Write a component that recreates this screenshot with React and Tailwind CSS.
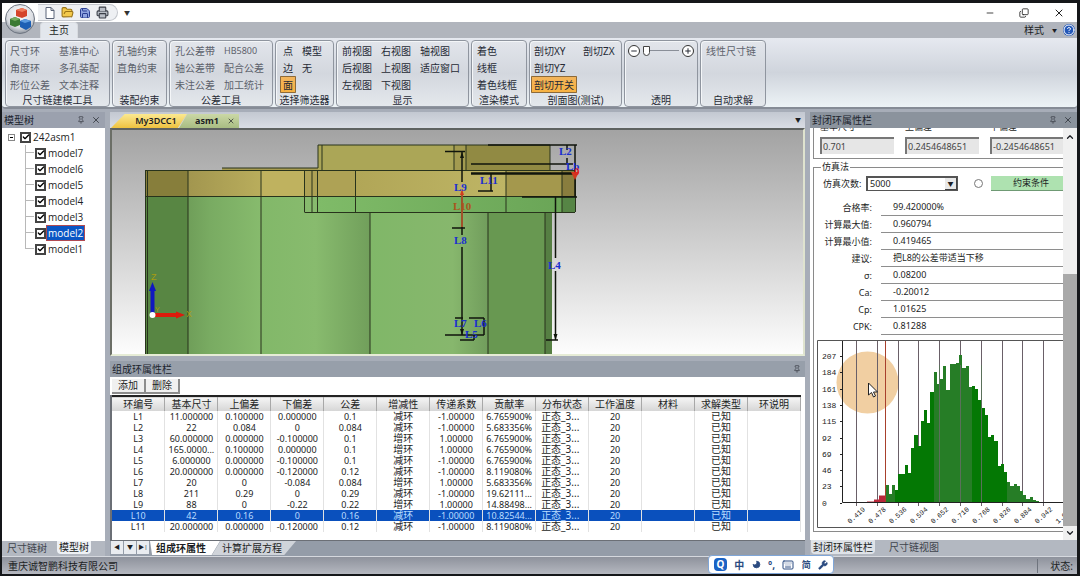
import { Check, ChevronDown, ChevronUp, Copy, FolderOpen, HelpCircle, Keyboard, Minus, Moon, Pin, Plus, Printer, Save, Wrench, X } from "lucide-react";
import clsx from "clsx";

const groups = [
  { title: "尺寸链建模工具", box: "w-[105px]", pad: "pl-px", muted: true, cols: [["尺寸环", "角度环", "形位公差"], ["基准中心", "多孔装配", "文本注释"]] },
  { title: "装配约束", box: "w-[55px]", pad: "pl-px", muted: true, cols: [["孔轴约束", "直角约束"]] },
  { title: "公差工具", box: "w-[104px]", pad: "pl-0.5", muted: true, cols: [["孔公差带", "轴公差带", "未注公差"], ["HB5800", "配合公差", "加工统计"]] },
  { title: "选择筛选器", box: "w-[59px]", pad: "pl-1", cols: [["点", "边", "面"], ["模型", "无"]] },
  { title: "显示", box: "w-[133px]", pad: "pl-0.5", cols: [["前视图", "后视图", "左视图"], ["右视图", "上视图", "下视图"], ["轴视图", "适应窗口"]] },
  { title: "渲染模式", box: "w-[56px]", pad: "pl-0.5", cols: [["着色", "线框", "着色线框"]] },
  { title: "剖面图(测试)", box: "w-[93px]", pad: "pl-px", cols: [["剖切XY", "剖切YZ", "剖切开关"], ["剖切ZX"]] },
  { title: "透明", box: "w-[74px]", pad: "", slider: true, cols: [] },
  { title: "自动求解", box: "w-[66px]", pad: "pl-0.5", muted: true, cols: [["线性尺寸链"]] },
];

const activeTools = ["面", "剖切开关"];

const models = ["model7", "model6", "model5", "model4", "model3", "model2", "model1"];

const headers = ["环编号", "基本尺寸", "上偏差", "下偏差", "公差", "增减性", "传递系数", "贡献率", "分布状态", "工作温度", "材料", "求解类型", "环说明"];

const rings = [
  ["L1", "11.000000", "0.100000", "0.000000", "0.1", "减环", "-1.00000", "6.765900%"],
  ["L2", "22", "0.084", "0", "0.084", "减环", "-1.00000", "5.683356%"],
  ["L3", "60.000000", "0.000000", "-0.100000", "0.1", "增环", "1.00000", "6.765900%"],
  ["L4", "165.0000...", "0.100000", "0.000000", "0.1", "增环", "1.00000", "6.765900%"],
  ["L5", "6.000000", "0.000000", "-0.100000", "0.1", "减环", "-1.00000", "6.765900%"],
  ["L6", "20.000000", "0.000000", "-0.120000", "0.12", "减环", "-1.00000", "8.119080%"],
  ["L7", "20", "0", "-0.084", "0.084", "增环", "1.00000", "5.683356%"],
  ["L8", "211", "0.29", "0", "0.29", "减环", "-1.00000", "19.62111..."],
  ["L9", "88", "0", "-0.22", "0.22", "增环", "1.00000", "14.88498..."],
  ["L10", "42", "0.16", "0", "0.16", "减环", "-1.00000", "10.82544..."],
  ["L11", "20.000000", "0.000000", "-0.120000", "0.12", "减环", "-1.00000", "8.119080%"],
];

const results = [
  ["合格率:", "99.420000%"],
  ["计算最大值:", "0.960794"],
  ["计算最小值:", "0.419465"],
  ["建议:", "把L8的公差带适当下移"],
  ["σ:", "0.08200"],
  ["Ca:", "-0.20012"],
  ["Cp:", "1.01625"],
  ["CPK:", "0.81288"],
];

const bars = [
  18, 9, 18, 13, 29, 29, 38, 30, 55, 68, 57, 82, 93, 80, 111, 131, 119, 124, 137, 113, 139, 139, 140, 148, 135, 137,
  116, 117, 114, 103, 95, 88, 66, 68, 62, 37, 39, 31, 21, 17, 19, 17, 12, 8, 4, 6, 3, 2, 1, 1, 1,
];

const xLabels = ["0.419", "0.478", "0.536", "0.594", "0.652", "0.710", "0.768", "0.826", "0.884", "0.942", "1.0"];
const yLabels = [207, 184, 161, 138, 115, 92, 69, 46, 23, 0];

function AppLogo() {
  return (
    <svg className="absolute left-0.5 top-0 h-8 w-8" viewBox="0 0 32 32">
      <defs>
        <radialGradient id="orb" cx="50%" cy="35%" r="65%">
          <stop offset="0" stopColor="#ffffff" />
          <stop offset="0.7" stopColor="#dadde2" />
          <stop offset="1" stopColor="#8d939d" />
        </radialGradient>
      </defs>
      <circle cx="16" cy="16" r="14.5" fill="url(#orb)" stroke="#6f7682" />
      <path d="M12 7l6-2 5 2v6l-5 2-6-2z" fill="#d5452b" />
      <path d="M12 7l6-2 5 2-5 2z" fill="#ef7c5c" />
      <path d="M6 16l5-2 5 2v6l-5 2-5-2z" fill="#3b7a34" />
      <path d="M6 16l5-2 5 2-5 2z" fill="#76ac5f" />
      <path d="M16 18l5-2 6 2v6l-5 3-6-3z" fill="#1d5fb4" />
      <path d="M16 18l5-2 6 2-6 2z" fill="#5b9be0" />
    </svg>
  );
}

function TitleBar() {
  return (
    <header className="relative shrink-0">
      <div className="flex h-[19px] items-center justify-between bg-white pl-9">
        <div className="flex items-center gap-1.5">
          <div className="flex h-[17px] items-center gap-[5px] rounded-r-full border border-l-0 border-[#c3c6cc] bg-[#eef0f3] pl-1.5 pr-2">
            <button aria-label="新建" className="px-px">
              <svg className="h-3 w-2.5" viewBox="0 0 10 12">
                <path d="M1 .5h5l3 3v8H1z" fill="#fff" stroke="#5a6478" />
                <path d="M6 .5v3h3" fill="none" stroke="#5a6478" />
              </svg>
            </button>
            <button aria-label="打开"><FolderOpen className="h-[13px] w-[13px] fill-[#f3c94b] text-[#9a7416]" /></button>
            <button aria-label="保存"><Save className="h-3 w-3 fill-[#8fa4e0] text-[#2b3f93]" /></button>
            <button aria-label="打印"><Printer className="h-[13px] w-[13px] fill-[#b9bec6] text-[#3a3f48]" /></button>
          </div>
          <button aria-label="自定义" className="text-[6px] text-[#333]">▼</button>
        </div>
        <div className="flex items-center gap-6 pr-3 text-[#222]">
          <button aria-label="最小化"><Minus className="h-2.5 w-2.5" /></button>
          <button aria-label="还原"><Copy className="h-2.5 w-2.5 -scale-x-100 rotate-180" /></button>
          <button aria-label="关闭"><X className="h-3 w-3" /></button>
        </div>
      </div>
      <div className="flex h-4 items-end justify-between bg-[#b1b5bd] pl-[38px] pr-0.5">
        <button className="h-4 rounded-t-sm border border-b-0 border-[#d8dbe0] bg-[#e3e7ed] px-2 leading-[15px]">主页</button>
        <div className="flex h-4 items-center gap-1.5">
          <button className="flex items-center gap-2">样式 <span className="text-[5px]">▼</span></button>
          <button aria-label="帮助"><HelpCircle className="h-3 w-3 rounded-full bg-[#2458b8] text-white" /></button>
        </div>
      </div>
      <AppLogo />
    </header>
  );
}

function RibbonGroup({ group }) {
  return (
    <section className={clsx("flex h-[67px] flex-col rounded-sm border border-[#8f959f] bg-linear-to-b from-[#e2e5eb] via-[#d3d7de] to-[#e4e8ec] shadow-[inset_1px_1px_0_#f4f6f8]", group.box)}>
      <div className={clsx("flex flex-1 gap-[3px] pt-px", group.pad, group.muted ? "text-[#5d626c]" : "text-[#262a35]")}>
        {group.cols.map((col, i) => (
          <div key={i} className="flex flex-col items-start">
            {col.map((name) => (
              <button
                key={name}
                className={clsx(
                  "h-[17px] whitespace-nowrap rounded-[1px] px-[3px] leading-[16px]",
                  name === "HB5800" && "text-[9px]",
                  activeTools.includes(name) && "bg-linear-to-b from-[#f2b45c] to-[#f8b23f] shadow-[inset_0_0_0_1px_#8c6a3a]"
                )}
              >
                {name}
              </button>
            ))}
          </div>
        ))}
        {group.slider && (
          <div className="flex h-[17px] flex-1 items-center justify-between px-[3px]">
            <button aria-label="减小" className="flex h-3 w-3 items-center justify-center rounded-full border border-[#333] bg-white"><Minus className="h-2 w-2 stroke-3" /></button>
            <input
              type="range"
              aria-label="透明"
              defaultValue="0"
              className="h-3 w-9 appearance-none bg-[linear-gradient(#8a8f98,#8a8f98)] bg-[length:100%_1px] bg-center bg-no-repeat [&::-webkit-slider-thumb]:h-[10px] [&::-webkit-slider-thumb]:w-[7px] [&::-webkit-slider-thumb]:appearance-none [&::-webkit-slider-thumb]:rounded-b-full [&::-webkit-slider-thumb]:border [&::-webkit-slider-thumb]:border-[#444] [&::-webkit-slider-thumb]:bg-white"
            />
            <button aria-label="增大" className="flex h-3 w-3 items-center justify-center rounded-full border border-[#333] bg-white"><Plus className="h-2 w-2 stroke-3" /></button>
          </div>
        )}
      </div>
      <h2 className="h-3 whitespace-nowrap text-center leading-3 text-[#262a35]">{group.title}</h2>
    </section>
  );
}

function PanelHeader({ title, closable, className }) {
  return (
    <div className={clsx("flex h-4 shrink-0 items-center justify-between pl-0.5 pr-1 text-[#20242e]", className)}>
      <h2 className="leading-4">{title}</h2>
      <div className="flex items-center gap-1.5 text-[#33373f]">
        <button aria-label="固定"><Pin className="h-2 w-2" /></button>
        {closable && <button aria-label="关闭面板"><X className="h-2.5 w-2.5" /></button>}
      </div>
    </div>
  );
}

function TreeCheck({ label, selected }) {
  return (
    <label className="flex items-center gap-px">
      <span className="grid h-[11px] w-[11px]">
        <input type="checkbox" defaultChecked className="h-[11px] w-[11px] appearance-none border-2 border-[#444] bg-white [grid-area:1/1]" />
        <Check className="pointer-events-none m-auto h-2 w-2 stroke-4 text-black [grid-area:1/1]" />
      </span>
      <span className={clsx("px-px font-['Open_Sans',sans-serif] leading-[14px]", selected && "bg-[#0a56c4] text-white outline outline-1 outline-[#b04a52]")}>{label}</span>
    </label>
  );
}

function ModelTree() {
  return (
    <aside className="flex w-[103px] shrink-0 flex-col">
      <PanelHeader title="模型树" closable className="bg-[#9ba1ae]" />
      <div className="flex-1 bg-white pl-1.5 pt-px">
        <div className="flex h-4 items-center gap-[5px]">
          <button aria-label="折叠" className="flex h-[7px] w-[7px] items-center justify-center border border-[#888]"><span className="h-px w-[3px] bg-black" /></button>
          <TreeCheck label="242asm1" />
        </div>
        <ul className="pl-[17px]">
          {models.map((name, i) => (
            <li key={name} className="flex h-4 items-center gap-px">
              <span className="flex h-full w-[9px] flex-col">
                <span className="h-1/2 border-b border-l border-[#b8b8b8]" />
                {i < models.length - 1 && <span className="h-1/2 border-l border-[#b8b8b8]" />}
              </span>
              <TreeCheck label={name} selected={name === "model2"} />
            </li>
          ))}
        </ul>
      </div>
      <div className="flex h-[15px] shrink-0 items-start gap-2.5 bg-[#b3b8c1] pl-[5px]">
        <button className="text-[#3f444d]">尺寸链树</button>
        <button className="h-[13px] rounded-b-sm bg-[#eef1f5] px-0.5 leading-[13px]">模型树</button>
      </div>
    </aside>
  );
}

function Viewport() {
  return (
    <svg className="block h-full w-full" viewBox="112 130 691 224" preserveAspectRatio="xMinYMin meet" role="img" aria-label="asm1">
      <defs>
        <linearGradient id="g1"><stop offset="0" stopColor="#6f9e59" /><stop offset="0.3" stopColor="#79ab62" /><stop offset="1" stopColor="#87bb6d" /></linearGradient>
        <linearGradient id="g2"><stop offset="0" stopColor="#82b869" /><stop offset="0.5" stopColor="#88bb6e" /><stop offset="1" stopColor="#719f5b" /></linearGradient>
        <linearGradient id="g3"><stop offset="0" stopColor="#80b768" /><stop offset="0.7" stopColor="#87b76d" /><stop offset="1" stopColor="#719d5c" /></linearGradient>
        <linearGradient id="y1"><stop offset="0" stopColor="#a2964f" /><stop offset="1" stopColor="#b9ad5c" /></linearGradient>
        <linearGradient id="y2"><stop offset="0" stopColor="#b1a657" /><stop offset="1" stopColor="#beb565" /></linearGradient>
        <linearGradient id="g4"><stop offset="0" stopColor="#7fbb68" /><stop offset="1" stopColor="#69a456" /></linearGradient>
      </defs>
      {/* lower body */}
      <rect x="145" y="197" width="43" height="158" fill="#588643" />
      <rect x="188" y="197" width="73" height="158" fill="url(#g1)" />
      <rect x="261" y="197" width="109" height="158" fill="url(#g2)" />
      <rect x="370" y="197" width="118" height="158" fill="url(#g3)" />
      <rect x="488" y="197" width="57" height="158" fill="#689851" />
      <rect x="545" y="197" width="7" height="158" fill="#567f43" />
      {/* flange */}
      <rect x="145" y="171" width="43" height="26" fill="#877e3b" />
      <rect x="188" y="171" width="73" height="26" fill="url(#y1)" />
      <rect x="261" y="171" width="44" height="26" fill="#bfb25f" />
      <rect x="305" y="171" width="51" height="26" fill="#aea255" />
      <rect x="356" y="171" width="150" height="26" fill="url(#y2)" />
      <rect x="506" y="171" width="56" height="26" fill="#a4984d" />
      <rect x="562" y="171" width="13" height="26" fill="#897d3e" />
      <rect x="318" y="197" width="257" height="15" fill="url(#g4)" />
      <rect x="562" y="197" width="13" height="15" fill="#568545" />
      {/* top block */}
      <rect x="222" y="168" width="96" height="3" fill="#a89d52" />
      <rect x="318" y="145" width="136" height="26" fill="#aba657" />
      <rect x="454" y="145" width="12" height="26" fill="#a39b50" />
      <rect x="466" y="145" width="84" height="26" fill="#918a43" />
      <path
        d="M145 170.500H575M145 196.500H575M304.500 212.500H575M222 168H318V145H550V170M322 145V170M454 145V170M466 145V170M145.500 171V355M147.500 171V355M188 171V355M261 171V355M370 212V355M488 212V355M545 212V355M304.500 171V212M312 171V212M317.500 171V212M355.500 171V212M506 171V212M562 171V212M575.500 171V212"
        fill="none"
        stroke="#28331c"
        strokeWidth="1"
      />
      {/* dimension lines */}
      <path
        d="M488 145H577M567 145V150M567 158V164M471 164H573M575 145V197M522 197H577M491 174V191M478 191H493M445 151.500H465M462 152V182M452 228H465M462 192V235M462 247V335M445 335H484M455 318H463M469 318H484M484 318V335M460 340H474M474 335V340M555.500 197V258M555.500 271V340M546 340H558"
        fill="none"
        stroke="#10150c"
        strokeWidth="1.500"
      />
      <path d="M471 173.500H576" stroke="#10150c" strokeWidth="2.500" />
      <path d="M462 192V227" stroke="#a0522a" strokeWidth="2" />
      <path d="M460 195l2-6 2 6zM571 172h8l-4 8z" fill="#d23a1e" />
      <path d="M553.500 334l2 6 2-6zM460 329l2 6 2-6zM460 158l2-6 2 6z" fill="#10150c" />
      <g fontFamily="'Liberation Serif', serif" fontWeight="bold" fontSize="11" fill="#1a2fd0">
        <text x="559" y="155">L2</text>
        <text x="480" y="184">L11</text>
        <text x="454" y="191">L9</text>
        <text x="453" y="210" fill="#a8561c">L10</text>
        <text x="454" y="244">L8</text>
        <text x="548" y="269">L4</text>
        <text x="454" y="327">L7</text>
        <text x="474" y="327">L6</text>
        <text x="465" y="338">L5</text>
        <text x="566" y="170">Lb</text>
        <text x="574" y="175" fill="#e02020">0</text>
      </g>
      {/* axis triad */}
      <path d="M152.500 314V290" stroke="#1018c0" strokeWidth="4" />
      <path d="M149 291l3.500-9 3.500 9z" fill="#1018c0" />
      <path d="M154 315H177" stroke="#dc1a0c" strokeWidth="4" />
      <path d="M176 311.500l9 3.500-9 3.500z" fill="#dc1a0c" />
      <circle cx="152.500" cy="315" r="3" fill="#fff" />
      <g fontFamily="'Liberation Sans', sans-serif" fontSize="9" fill="#a89c10">
        <text x="151" y="280">Z</text>
        <text x="155" y="312" fontSize="7">Y</text>
        <text x="186" y="317">X</text>
      </g>
    </svg>
  );
}

function RingTable() {
  return (
    <table className="w-full table-fixed border-collapse text-center">
      <thead>
        <tr className="h-[15px] border-t-2 border-[#222] bg-linear-to-b from-[#f4f4f4] to-[#d6d6d6]">
          {headers.map((name) => (
            <th key={name} className="whitespace-nowrap border-r border-[#a8a8a8] p-0 font-normal leading-[13px]">{name}</th>
          ))}
        </tr>
      </thead>
      <tbody className="text-[9px]">
        {rings.map((ring) => {
          const selected = ring[0] === "L10";
          const cells = [...ring, "正态_3...", "20", "", "已知", ""];
          return (
            <tr key={ring[0]} className={clsx("h-[11px]", selected && "bg-[#0a50bd] text-[#b9dcff]")}>
              {cells.map((cell, i) => (
                <td
                  key={i}
                  className={clsx(
                    "whitespace-nowrap border-r border-[#e2e2e2] p-0 leading-[11px]",
                    (i === 5 || i === 8 || i === 11) && "text-[10px]",
                    i === 8 && "pl-[5px] text-left"
                  )}
                >
                  {cell}
                </td>
              ))}
            </tr>
          );
        })}
      </tbody>
    </table>
  );
}

function Workspace() {
  return (
    <main className="flex min-w-0 flex-1 flex-col">
      <div className="flex h-4 shrink-0 items-end justify-between bg-linear-to-b from-[#c3c8d1] to-[#d9dde4] pl-px pr-1">
        <div className="flex h-[14px] text-[9px] font-semibold">
          <button className="h-full w-[76px] bg-linear-to-b from-[#fbe98f] to-[#eec23d] pl-3.5 leading-[14px] [clip-path:polygon(18%_0,100%_0,88%_100%,0_100%)]">My3DCC1</button>
          <div className="-ml-2 flex h-full w-[60px] items-center justify-between bg-linear-to-b from-[#cbd8a6] to-[#a9bd83] pl-4 pr-1 [clip-path:polygon(14%_0,100%_0,100%_100%,0_100%)]">
            <button className="font-bold leading-[14px]">asm1</button>
            <button aria-label="关闭 asm1"><X className="h-2 w-2" /></button>
          </div>
        </div>
        <button aria-label="文档列表" className="self-center text-[6px]">▼</button>
      </div>
      <div className="min-h-0 flex-1 border-2 border-b-[#e6ecd6] border-l-[#6b6e66] border-r-[#dfe3cf] border-t-[#5e6260] bg-linear-to-b from-[#a3a3a3] to-[#fdfdfd]">
        <Viewport />
      </div>
      <PanelHeader title="组成环属性栏" className="mt-[5px] bg-[#979faa]" />
      <div className="flex h-[18px] shrink-0 items-center bg-white pl-0.5">
        <button className="h-[15px] border-b-2 border-r-2 border-[#8c8c8c] bg-[#f0f0f0] px-1.5 leading-[13px]">添加</button>
        <button className="h-[15px] border-b-2 border-r-2 border-[#8c8c8c] bg-[#f0f0f0] px-1.5 leading-[13px]">删除</button>
      </div>
      <div className="h-[146px] shrink-0 border-b border-l-2 border-[#6b6f76] bg-white pr-1">
        <RingTable />
      </div>
      <div className="flex h-[15px] shrink-0 items-start bg-[#949ca8]">
        <div className="flex gap-px px-px">
          {["◀", "▼", "▶|"].map((mark) => (
            <button key={mark} className="h-[13px] w-3 bg-[#e9ecf0] text-[6px] leading-[13px]">{mark}</button>
          ))}
        </div>
        <button className="h-[14px] w-[70px] bg-white pl-1.5 text-left font-bold leading-[14px] [clip-path:polygon(0_0,100%_0,88%_100%,3%_100%)]">组成环属性</button>
        <button className="-ml-2 h-[14px] w-[84px] bg-[#d0d4da] pl-2.5 text-left leading-[14px] [clip-path:polygon(10%_0,100%_0,86%_100%,0_100%)]">计算扩展方程</button>
      </div>
    </main>
  );
}

function Histogram() {
  return (
    <svg className="mt-[5px] block h-[188px] w-[250px]" viewBox="817 341 250 188" role="img" aria-label="仿真直方图">
      <path d="M1067 341.500H817.500V528.500H1067" fill="#fff" stroke="#555" />
      <circle cx="867.500" cy="383.500" r="31" fill="#f1cfa2" />
      {xLabels.slice(0, 10).map((label, i) => (
        <path key={label} d={`M${Math.round(856 + i * 20.8) + 0.5} 342V507`} stroke="#6a6068" />
      ))}
      <path d="M867 503.500v-1h7v-2h5v-4h7v7z" fill="#b8283a" />
      <g shapeRendering="crispEdges">
        {bars.map((h, i) => (
          <rect
            key={i}
            x={885.6 + i * 3.2}
            y={503.5 - h}
            width="3.200"
            height={h}
            fill={i < 3 || (i > 14 && i < 27) || i > 37 ? "#267d26" : "#047804"}
          />
        ))}
      </g>
      {xLabels.slice(4, 7).map((label, i) => (
        <path key={label} d={`M${Math.round(939 + i * 20.8) + 0.5} 366V503`} stroke="#5a705a" />
      ))}
      <path d="M885.500 342V503" stroke="#a8402c" />
      <path d="M842.500 342V503.500H1067" fill="none" stroke="#222" />
      <g fontFamily="'Liberation Mono', monospace" fontSize="8" fill="#222">
        {yLabels.map((label, i) => (
          <g key={label}>
            <path d={`M840 ${Math.round(357 + i * 16.3) + 0.5}h2`} stroke="#222" />
            <text x="822" y={360 + i * 16.3}>{label}</text>
          </g>
        ))}
        {xLabels.map((label, i) => (
          <text key={label} transform={`translate(${850 + i * 20.8} 525) rotate(-42)`} fontSize="7">{label}</text>
        ))}
      </g>
      <path d="M868.500 384v12l3-2.500 2 4.500 2-1-2-4h4z" fill="#fff" stroke="#222" />
    </svg>
  );
}

function ClosedRing() {
  return (
    <aside className="flex w-[267px] shrink-0 flex-col">
      <PanelHeader title="封闭环属性栏" closable className="bg-[#8b939d]" />
      <div className="flex min-h-0 flex-1 bg-white text-[9px]">
        <div className="min-w-0 flex-1 overflow-hidden pl-[3px]">
          <div className="h-[31px] border-b border-l border-[#8a8a8a] pl-1.5">
            <div className="flex gap-[11px]">
              {[["基本尺寸", "0.701"], ["上偏差", "0.2454648651"], ["下偏差", "-0.2454648651"]].map(([name, value]) => (
                <label key={name} className="w-[74px] shrink-0">
                  <span className="flex h-[3px] items-end overflow-hidden leading-[9px]">{name}</span>
                  <input readOnly value={value} className="mt-[6px] block h-[17px] w-full border-l-2 border-t-2 border-[#777] bg-[#e6e6e6] px-px text-[#444]" />
                </label>
              ))}
            </div>
          </div>
          <fieldset className="mt-[3px] w-[270px] border border-[#8a8a8a] pb-[3px] pl-[3px]">
            <legend className="ml-1 px-px leading-[10px]">仿真法</legend>
            <div className="mt-1 flex items-center pl-1.5">
              <label htmlFor="runs" className="w-[43px] whitespace-nowrap">仿真次数:</label>
              <div className="flex h-[15px] w-[92px] border border-l-2 border-t-2 border-[#555]">
                <select id="runs" className="min-w-0 flex-1 appearance-none bg-white px-0.5 leading-3">
                  <option>5000</option>
                </select>
                <span className="pointer-events-none w-3 border-b border-r border-[#444] bg-[#e8e8e8] text-center text-[6px] leading-3">▼</span>
              </div>
              <input type="radio" aria-label="约束条件" className="ml-4 h-[9px] w-[9px] appearance-none rounded-full border border-[#777] bg-white" />
              <button className="ml-2 h-[15px] w-[80px] border-b border-[#6f9a74] bg-[#aee2b0]">约束条件</button>
            </div>
            <dl className="mt-2">
              {results.map(([name, value]) => (
                <div key={name} className="flex h-[17px] items-center">
                  <dt className="w-[55px] text-right">{name}</dt>
                  <dd className="ml-[9px] h-full flex-1 border-b border-[#8e8e8e] pl-3 leading-[16px]">{value}</dd>
                </div>
              ))}
            </dl>
            <Histogram />
          </fieldset>
        </div>
        <div className="flex w-[14px] shrink-0 flex-col items-center bg-[#f0f0f0]">
          <ChevronUp className="my-1 h-2.5 w-2.5 stroke-3" />
          <span className="h-[128px]" />
          <span className="w-full flex-1 bg-[#a9a9a9]" />
          <ChevronDown className="my-0.5 h-2.5 w-2.5 stroke-3" />
        </div>
      </div>
      <div className="flex h-4 shrink-0 items-start gap-3.5 bg-[#b3b8c1] pl-px">
        <button className="h-[14px] rounded-b-sm bg-[#dfe3e8] px-0.5 leading-[14px]">封闭环属性栏</button>
        <button className="leading-[14px] text-[#3f444d]">尺寸链视图</button>
      </div>
    </aside>
  );
}

function InputMethodBar() {
  return (
    <div className="absolute bottom-0 left-[706px] flex h-[19px] w-[126px] items-center justify-between rounded-sm border border-[#7fa6d8] bg-white px-[5px] text-[#2a4a80]">
      <button className="h-[13px] w-[13px] rounded-sm bg-[#1a62c4] font-bold leading-[13px] text-white">Q</button>
      <button className="font-bold">中</button>
      <button aria-label="半角"><Moon className="h-[9px] w-[9px] -scale-x-100 fill-current" /></button>
      <button className="font-bold leading-3">°,</button>
      <button aria-label="软键盘"><Keyboard className="h-3 w-3" /></button>
      <button aria-label="简繁" className="text-[9px] font-bold">简</button>
      <button aria-label="设置"><Wrench className="h-2.5 w-2.5 fill-current" /></button>
    </div>
  );
}

export default function App() {
  return (
    <div className="flex h-screen min-h-[576px] flex-col border-b-2 border-l-2 border-r-[3px] border-t-[3px] border-[#15171a] bg-[#a7adb8] font-['Noto_Sans','Noto_Sans_CJK_SC',sans-serif] text-[10px] leading-[14px] text-[#1c1e24]">
      <TitleBar />
      <nav className="flex h-[71px] shrink-0 gap-0.5 rounded-b-sm border-b-2 border-[#868c96] bg-linear-to-b from-[#e6e9f0] via-[#cfd4dc] to-[#edf3f6] pl-[3px] pt-0.5">
        {groups.map((group) => (
          <RibbonGroup key={group.title} group={group} />
        ))}
      </nav>
      <div className="mt-[3px] flex min-h-0 flex-1 gap-[5px]">
        <ModelTree />
        <Workspace />
        <ClosedRing />
      </div>
      <footer className="relative flex h-[18px] shrink-0 items-center justify-between border-t border-[#d5d8de] bg-linear-to-b from-[#8e929c] to-[#b5b8c0] pl-1.5">
        <span>重庆诚智鹏科技有限公司</span>
        <span className="border-l border-[#6f747e] pl-3 pr-1">状态:</span>
        <InputMethodBar />
      </footer>
    </div>
  );
}
